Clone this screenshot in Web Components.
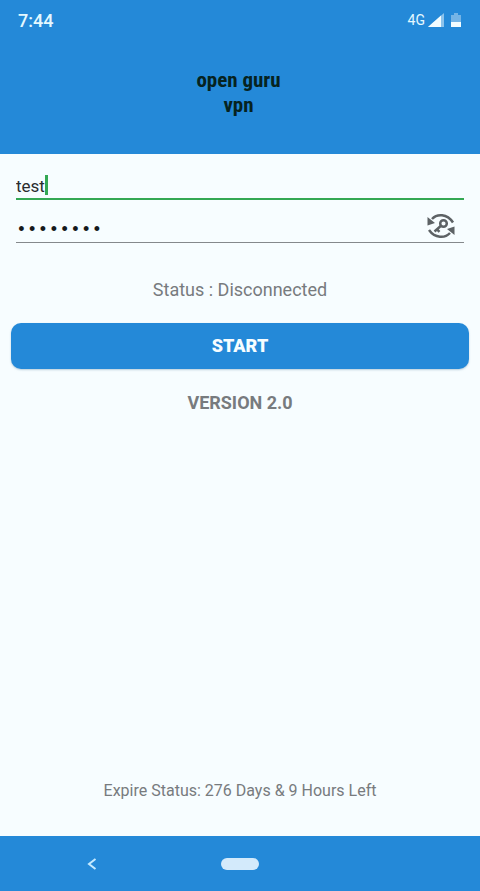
<!DOCTYPE html>
<html lang="en">
<head>
<meta charset="utf-8">
<meta name="viewport" content="width=device-width, initial-scale=1">
<title>open guru vpn</title>
<style>
  html, body { margin: 0; height: 100%; }
  body {
    --blue: #2489d8;
    --paper: #f7fdff;
    --green: #34a853;
    --grey: #777b7e;
    font-family: Roboto, "Liberation Sans", sans-serif;
    background: var(--paper);
  }
</style>
</head>
<body>
<vpn-app>
  <vpn-header slot="top"><status-bar slot="status" time="7:44" network="4G"></status-bar>open guru<br>vpn</vpn-header>
  <text-field label="Username" value="test" active></text-field>
  <text-field label="Password" type="password" value="password"><key-toggle slot="action"></key-toggle></text-field>
  <info-text variant="status">Status : Disconnected</info-text>
  <start-button>START</start-button>
  <info-text variant="version">VERSION 2.0</info-text>
  <info-text slot="footer" variant="expiry">Expire Status: 276 Days &amp; 9 Hours Left</info-text>
  <nav-bar slot="bottom"></nav-bar>
</vpn-app>
<script>
  class Base extends HTMLElement {
    connectedCallback() {
      if (this.shadowRoot) return;
      this.attachShadow({ mode: 'open' }).innerHTML = this.render();
    }
  }

  customElements.define('vpn-app', class extends Base {
    render() {
      return `<style>
        :host { display: flex; flex-direction: column; min-height: 100vh; background: var(--paper); }
        main { flex: 1; display: flex; flex-direction: column; padding-top: 16px; }
        footer { padding-bottom: 34px; }
      </style>
      <slot name="top"></slot>
      <main><slot></slot></main>
      <footer><slot name="footer"></slot></footer>
      <slot name="bottom"></slot>`;
    }
  });

  customElements.define('vpn-header', class extends Base {
    render() {
      return `<style>
        :host { display: block; background: var(--blue); padding-bottom: 36px; }
        h1 { margin: 0; padding: 28px 3px 0 0; text-align: center; font: bold 21px/25px "Liberation Sans Narrow", "Roboto Condensed", Roboto, sans-serif; color: #06231f; }
      </style>
      <slot name="status"></slot>
      <h1><slot></slot></h1>`;
    }
  });

  customElements.define('status-bar', class extends Base {
    render() {
      return `<style>
        :host { display: flex; align-items: center; justify-content: space-between; height: 40px; padding: 0 18px; color: #e4f8ff; }
        time { font-size: 18px; font-weight: 500; }
        div { display: flex; align-items: center; font-size: 14px; }
        svg { display: block; }
        .signal { margin: 0 6px 0 3px; }
      </style>
      <time>${this.getAttribute('time')}</time>
      <div><span>${this.getAttribute('network')}</span>
        <svg class="signal" width="16" height="14" viewBox="0 0 16 14"><path d="M16 0v14H0z" fill="#8cc3ec"/><path d="M13 2.600V14H0z" fill="#f2fcff"/></svg>
        <svg width="12" height="16" viewBox="0 0 12 16"><path d="M4 1h4v2h3v7H1V3h3z" fill="#74b4e6"/><path d="M1 10h10v5H1z" fill="#f2fcff"/></svg>
      </div>`;
    }
  });

  customElements.define('text-field', class extends Base {
    render() {
      const active = this.hasAttribute('active');
      return `<style>
        :host { display: flex; position: relative; align-items: center; margin: 0 16px; height: 42px; border-bottom: 1px solid #85898c; }
        :host([active]) { height: 28px; border-bottom: 2px solid var(--green); }
        input { flex: 1; min-width: 0; margin: 0; padding: 3px 0 0; border: 0; outline: 0; background: none; color: #292c2e; font: 17px/20px Roboto, sans-serif; }
        input[type=password] { padding: 18px 0 0; font: 18px/20px "Liberation Mono", monospace; color: #16191b; }
        .caret { position: absolute; left: 29px; top: 5px; width: 3px; height: 20px; background: var(--green); }
      </style>
      <input type="${this.getAttribute('type') || 'text'}" aria-label="${this.getAttribute('label')}" value="${this.getAttribute('value')}">
      ${active ? '<span class="caret"></span>' : ''}
      <slot name="action"></slot>`;
    }
  });

  customElements.define('key-toggle', class extends Base {
    render() {
      return `<style>
        :host { display: block; padding: 9px 8px 0 0; }
        button { display: block; padding: 0; border: 0; background: none; color: #5d6265; }
        svg { display: block; }
      </style>
      <button type="button" aria-label="Show password">
        <svg width="30" height="26" viewBox="0 0 30 26" fill="none" stroke="currentColor" stroke-width="2.500">
          <path d="M6 6C11 .500 21 .500 27 9.500M3 17C9 25.500 19 25.500 24 20"/>
          <path d="M1.500 4v8.500l7.500-2.500zM28.500 22v-8.500l-7.500 2.500z" fill="currentColor" stroke="none"/>
          <circle cx="17.500" cy="10.500" r="3.300"/>
          <path d="M15 12.800L8.500 18.500M10.200 15.500l3.300 3.300"/>
        </svg>
      </button>`;
    }
  });

  customElements.define('info-text', class extends Base {
    render() {
      return `<style>
        :host { display: block; text-align: center; color: var(--grey); }
        :host([variant=status]) { padding: 36px 0 22px; font-size: 18px; line-height: 22px; }
        :host([variant=version]) { padding-top: 23px; font-size: 18px; line-height: 22px; font-weight: bold; }
        :host([variant=expiry]) { font-size: 16px; line-height: 22px; }
        p { margin: 0; }
      </style><p><slot></slot></p>`;
    }
  });

  customElements.define('start-button', class extends Base {
    render() {
      return `<style>
        :host { display: block; margin: 0 11px; }
        button { display: block; width: 100%; height: 46px; padding: 0; border: 0; border-radius: 10px; background: var(--blue); box-shadow: 0 1px 2px #7fa3bb88; color: #f7fdff; font: 900 18px/22px Roboto, sans-serif; }
      </style><button type="button"><slot></slot></button>`;
    }
  });

  customElements.define('nav-bar', class extends Base {
    render() {
      return `<style>
        :host { display: grid; grid-template-columns: 1fr auto 1fr; align-items: center; height: 55px; background: var(--blue); }
        button { display: block; padding: 0; border: 0; background: none; }
        .back { margin-left: 87px; justify-self: start; }
        .home { width: 38px; height: 12px; border-radius: 6px; background: #d3eafb; }
        svg { display: block; }
      </style>
      <button class="back" type="button" aria-label="Back"><svg width="10" height="12" viewBox="0 0 10 12" fill="none" stroke="#c5eaff" stroke-width="2"><path d="M8.500 1L2 6l6.500 5"/></svg></button>
      <button class="home" type="button" aria-label="Home"></button>`;
    }
  });
</script>
</body>
</html>
